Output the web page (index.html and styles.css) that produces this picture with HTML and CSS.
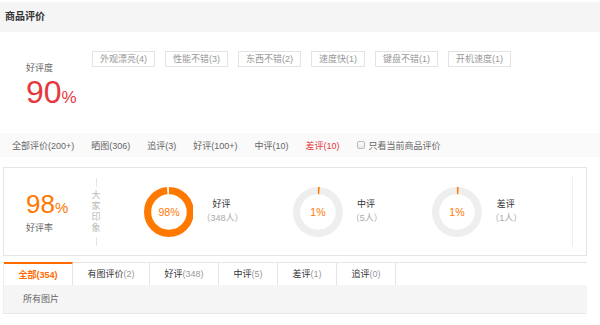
FILE: index.html
```html
<!DOCTYPE html>
<html lang="zh-CN">
<head>
    <meta charset="UTF-8">
    <title>商品评价</title>
    <link rel="stylesheet" href="styles.css">
</head>
<body>
<div class="comment-wrap">
    <div class="comment-head">商品评价</div>

    <div class="comment-rate">
        <div class="rate-score">
            <div class="rate-label">好评度</div>
            <div class="rate-num">90<span>%</span></div>
        </div>
        <div class="tag-list">
            <span class="tag">外观漂亮(4)</span>
            <span class="tag">性能不错(3)</span>
            <span class="tag">东西不错(2)</span>
            <span class="tag">速度快(1)</span>
            <span class="tag">键盘不错(1)</span>
            <span class="tag">开机速度(1)</span>
        </div>
    </div>

    <div class="filter-bar">
        <span class="filter-item">全部评价(200+)</span>
        <span class="filter-item">晒图(306)</span>
        <span class="filter-item">追评(3)</span>
        <span class="filter-item">好评(100+)</span>
        <span class="filter-item">中评(10)</span>
        <span class="filter-item filter-red">差评(10)</span>
        <label class="filter-check"><input type="checkbox"> 只看当前商品评价</label>
    </div>

    <div class="summary-box">
        <div class="summary-rate">
            <div class="summary-num">98<span>%</span></div>
            <div class="summary-label">好评率</div>
        </div>
        <div class="impress">
            <span class="impress-text">大家印象</span>
        </div>
        <div class="pie-item">
            <svg class="pie" width="52" height="52" viewBox="0 0 52 52">
                <circle class="pie-bar" cx="26" cy="26" r="22.25" stroke-dasharray="137 140" transform="rotate(-90 26 26)"></circle>
                <text class="pie-text" x="26" y="30">98%</text>
            </svg>
            <div class="pie-info">
                <div class="pie-name">好评</div>
                <div class="pie-count">（348人）</div>
            </div>
        </div>
        <div class="pie-item">
            <svg class="pie" width="52" height="52" viewBox="0 0 52 52">
                <circle class="pie-track" cx="26" cy="26" r="22.25"></circle>
                <circle class="pie-bar" cx="26" cy="26" r="22.25" stroke-dasharray="1.6 140" transform="rotate(-90 26 26)"></circle>
                <text class="pie-text" x="26" y="30">1%</text>
            </svg>
            <div class="pie-info">
                <div class="pie-name">中评</div>
                <div class="pie-count">（5人）</div>
            </div>
        </div>
        <div class="pie-item">
            <svg class="pie" width="52" height="52" viewBox="0 0 52 52">
                <circle class="pie-track" cx="26" cy="26" r="22.25"></circle>
                <circle class="pie-bar" cx="26" cy="26" r="22.25" stroke-dasharray="1.6 140" transform="rotate(-90 26 26)"></circle>
                <text class="pie-text" x="26" y="30">1%</text>
            </svg>
            <div class="pie-info">
                <div class="pie-name">差评</div>
                <div class="pie-count">（1人）</div>
            </div>
        </div>
        <div class="summary-line"></div>
    </div>

    <div class="tab-box">
        <ul class="tabs">
            <li class="tab active">全部(354)</li>
            <li class="tab">有图评价<em>(2)</em></li>
            <li class="tab">好评<em>(348)</em></li>
            <li class="tab">中评<em>(5)</em></li>
            <li class="tab">差评<em>(1)</em></li>
            <li class="tab">追评<em>(0)</em></li>
        </ul>
        <div class="tab-sub">所有图片</div>
    </div>
</div>
</body>
</html>
```

FILE: styles.css
```css
body {
    margin: 0;
    background: #fff;
    font-family: "Liberation Sans", "Noto Sans CJK SC", sans-serif;
    font-size: 9px;
    color: #666;
}

.comment-wrap {
    width: 600px;
    padding-top: 2px;
}

.comment-head {
    height: 30px;
    line-height: 30px;
    padding-left: 5px;
    background-color: #f5f5f5;
    font-size: 10px;
    font-weight: bold;
    color: #333;
}

/* 好评度 */
.comment-rate {
    display: flex;
    height: 101px;
}

.rate-score {
    width: 66px;
    margin-left: 26px;
    padding-top: 30px;
}

.rate-label {
    line-height: 12px;
    color: #666;
}

.rate-num {
    margin-top: 2px;
    font-size: 32px;
    line-height: 32px;
    color: #e4393c;
}

.rate-num span {
    font-size: 17px;
}

.tag-list {
    display: flex;
    align-items: flex-start;
    gap: 10px;
    padding-top: 19px;
}

.tag {
    height: 14px;
    line-height: 14px;
    padding: 0 7px;
    border: 1px solid #e3e3e3;
    color: #999;
}

/* 筛选条 */
.filter-bar {
    display: flex;
    align-items: center;
    height: 24px;
    padding-left: 12px;
    background-color: #fafafa;
}

.filter-item {
    margin-right: 17px;
    color: #666;
}

.filter-red {
    color: #e4393c;
}

.filter-check {
    display: flex;
    align-items: center;
    gap: 4px;
    color: #666;
}

.filter-check input {
    appearance: none;
    width: 8px;
    height: 8px;
    margin: 0;
    border: 1px solid #bbb;
    border-radius: 2px;
    background: linear-gradient(#fff, #e8e8e8);
}

/* 好评率 / 圆环 */
.summary-box {
    display: flex;
    align-items: center;
    height: 89px;
    margin: 10px 13px 0 3px;
    border: 1px solid #e5e5e5;
    box-sizing: border-box;
}

.summary-rate {
    width: 68px;
    margin-left: 22px;
}

.summary-num {
    font-size: 26px;
    line-height: 28px;
    color: #ff7800;
}

.summary-num span {
    font-size: 15px;
}

.summary-label {
    line-height: 12px;
    color: #666;
}

.impress {
    display: flex;
    flex-direction: column;
    align-items: center;
    width: 9px;
}

.impress::before,
.impress::after {
    content: "";
    width: 1px;
    height: 9px;
    background-color: #e5e5e5;
}

.impress-text {
    width: 9px;
    margin: 3px 0;
    line-height: 11px;
    color: #bbb;
    word-break: break-all;
}

.pie-item {
    display: flex;
    align-items: center;
    margin-right: 51px;
}

.impress + .pie-item {
    margin-left: 43px;
}

.pie {
    display: block;
}

.pie-track {
    fill: none;
    stroke: #eee;
    stroke-width: 7.5;
}

.pie-bar {
    fill: none;
    stroke: #ff7800;
    stroke-width: 7.5;
}

.pie-text {
    fill: #ff7800;
    font-size: 11px;
    text-anchor: middle;
}

.pie-info {
    margin-left: 8px;
    text-align: center;
}

.pie-name {
    line-height: 13px;
    color: #333;
}

.pie-count {
    line-height: 14px;
    color: #aaa;
}

.summary-line {
    width: 1px;
    height: 69px;
    margin-left: auto;
    margin-right: 13px;
    background-color: #eee;
}

/* 标签页 */
.tab-box {
    margin: 6px 13px 0 3px;
}

.tabs {
    display: flex;
    margin: 0;
    padding: 0;
    list-style: none;
    border-top: 1px solid #e5e5e5;
    border-left: 1px solid #eee;
}

.tab {
    height: 22px;
    line-height: 22px;
    padding: 0 14.5px;
    border-right: 1px solid #e5e5e5;
    color: #333;
}

.tab em {
    font-style: normal;
    color: #999;
}

.tab.active {
    margin-top: -1px;
    border-top: 2px solid #ff6a00;
    height: 21px;
    color: #ff6a00;
    font-weight: bold;
}

.tab-sub {
    height: 28px;
    line-height: 28px;
    padding-left: 19px;
    background-color: #f5f5f5;
    border-bottom: 1px solid #e8e8e8;
    border-left: 1px solid #eee;
    color: #666;
}
```
